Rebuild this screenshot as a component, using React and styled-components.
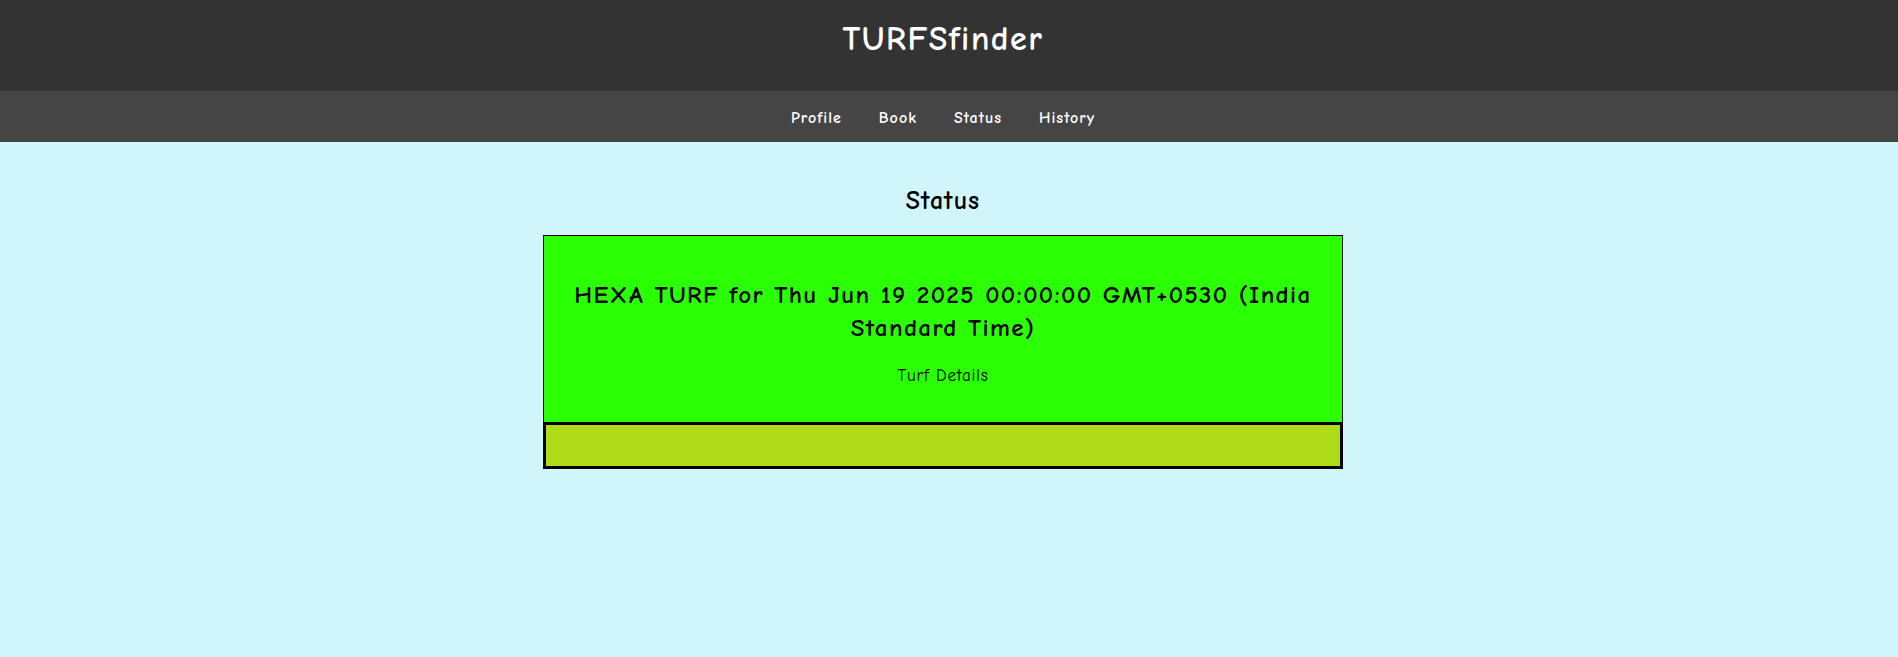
import styled, { createGlobalStyle } from 'styled-components'

const GlobalStyle = createGlobalStyle`
    html, body {
        margin: 0;
        padding: 0;
        background: #d0f5fb;
        font-family: "Comic Sans MS", "Comic Neue", "Open Sans", sans-serif;
    }
    #root {
        min-height: 100vh;
    }
`

const links = ['Profile', 'Book', 'Status', 'History']

const App = () => {
    return (
        <>
            <GlobalStyle />
            <Header>
                <Title>TURFSfinder</Title>
            </Header>
            <Nav>
                {links.map((name) => (
                    <NavLink key={name} href="#">
                        {name}
                    </NavLink>
                ))}
            </Nav>
            <Main>
                <Heading>Status</Heading>
                <Card>
                    <CardTitle>
                        HEXA TURF for Thu Jun 19 2025 00:00:00 GMT+0530 (India
                        Standard Time)
                    </CardTitle>
                    <CardText>Turf Details</CardText>
                </Card>
                <StatusBar />
            </Main>
        </>
    )
}

export default App

const Header = styled.header`
    background: #333333;
    color: #ffffff;
    text-align: center;
    padding: 17px 12px 30px 0;
`

const Title = styled.h1`
    margin: 0;
    font-size: 34px;
    line-height: 44px;
    letter-spacing: 1.5px;
    font-weight: bold;
`

const Nav = styled.nav`
    background: #454545;
    display: flex;
    justify-content: center;
    align-items: center;
    gap: 37px;
    height: 51px;
    padding: 2px 12px 0 0;
    box-sizing: border-box;
`

const NavLink = styled.a`
    color: #ffffff;
    text-decoration: none;
    font-size: 16px;
    font-weight: bold;
    line-height: 22px;
    letter-spacing: 1px;
`

const Main = styled.main`
    display: flex;
    flex-direction: column;
    align-items: center;
    padding: 22px 12px 20px 0;
`

const Heading = styled.h2`
    margin: 21px 0 17px;
    font-size: 26px;
    line-height: 33px;
    letter-spacing: 1px;
    font-weight: bold;
    color: #000000;
`

const Card = styled.div`
    box-sizing: border-box;
    width: 800px;
    height: 188px;
    padding: 20px;
    background: #2bff04;
    border: 1px solid #000000;
    text-align: center;
`

const CardTitle = styled.h2`
    margin: 22px 0 20px;
    font-size: 25px;
    line-height: 33px;
    letter-spacing: 1.4px;
    font-weight: bold;
    color: #000000;
`

const CardText = styled.p`
    margin: 21px 0 16px;
    font-size: 17px;
    line-height: 22px;
    letter-spacing: 0.8px;
    color: #000000;
`

const StatusBar = styled.div`
    box-sizing: border-box;
    width: 800px;
    height: 47px;
    margin-top: -1px;
    background: #b0db19;
    border: 3px solid #000000;
`
